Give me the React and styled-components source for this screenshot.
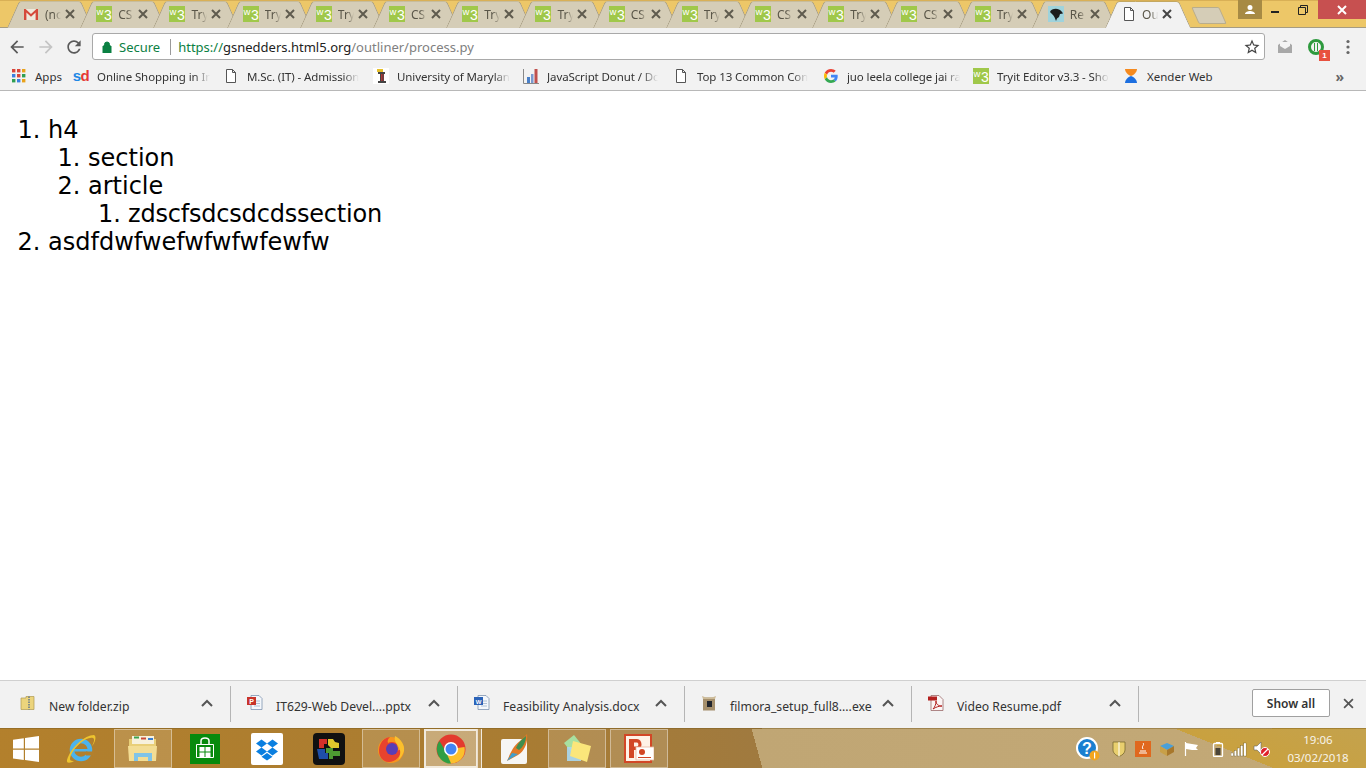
import React from 'react';
import styled, { createGlobalStyle } from 'styled-components';

const GlobalStyle = createGlobalStyle`
  html, body { margin: 0; padding: 0; height: 100%; background: #fff; overflow: hidden; }
  #root { height: 100%; }
`;

const uiFont = `"Noto Sans", "Open Sans", sans-serif`;

const Page = styled.div`
  display: flex;
  flex-direction: column;
  width: 1366px;
  height: 768px;
  font-family: ${uiFont};
`;

/* ---------- tab strip ---------- */
const TabStrip = styled.div`
  display: flex;
  height: 28px;
  flex: none;
  background: #edc768;
  box-shadow: inset 0 1px 0 #d9b056;
  padding-left: 7px;
  position: relative;
`;

const TabShape = styled.div`
  position: relative;
  isolation: isolate;
  flex: none;
  width: 85px;
  height: 28px;
  margin-right: -11.8px;
  display: flex;
  align-items: center;
  padding-left: 16px;
  box-sizing: border-box;

  &::before, &::after {
    content: '';
    position: absolute;
    z-index: -1;
    top: 1px;
    bottom: 0;
    width: 50%;
    background: ${(p) => (p.$active ? '#f2f2f2' : '#d5cdb7')};
    border-top: 1px solid ${(p) => (p.$active ? '#c4a860' : '#c8bd9b')};
  }
  &::before {
    left: 6px;
    transform: skewX(-24deg);
    border-left: 1px solid #a69c82;
    border-top-left-radius: 3px;
  }
  &::after {
    right: 6px;
    transform: skewX(24deg);
    border-right: 1px solid #a69c82;
    border-top-right-radius: 3px;
  }
`;

const TabTitle = styled.span`
  width: 16px;
  margin-left: ${(p) => (p.$active ? '5px' : '6px')};
  overflow: hidden;
  white-space: nowrap;
  font-size: 12px;
  color: #5a5648;
  -webkit-mask-image: linear-gradient(to right, #000 55%, transparent);
  mask-image: linear-gradient(to right, #000 55%, transparent);
`;

const TabClose = styled.svg`
  width: 10px;
  height: 10px;
  margin-left: 4px;
  flex: none;
`;

const TabLine = styled.div`
  position: absolute;
  left: 0;
  right: 0;
  bottom: 0;
  height: 1px;
  background: #a69c82;
`;

const ActiveGap = styled.div`
  position: absolute;
  left: 1107px;
  width: 81px;
  bottom: 0;
  height: 1px;
  background: #f2f2f2;
`;

const NewTab = styled.div`
  flex: none;
  width: 26px;
  height: 15px;
  margin: 7px 0 0 17px;
  background: #d5cdb7;
  border: 1px solid #b9ad8c;
  border-radius: 2px;
  transform: skewX(24deg);
`;

const WindowControls = styled.div`
  margin-left: auto;
  display: flex;
  height: 19px;
  position: relative;
  z-index: 2;
`;

const AvatarButton = styled.div`
  width: 24px;
  background: #a78a44;
  display: flex;
  align-items: center;
  justify-content: center;
`;

const WindowButton = styled.div`
  width: ${(p) => p.$w}px;
  background: ${(p) => p.$bg || 'transparent'};
  display: flex;
  align-items: center;
  justify-content: center;
`;

/* ---------- toolbar ---------- */
const Toolbar = styled.div`
  display: flex;
  align-items: center;
  flex: none;
  height: 35px;
  box-sizing: border-box;
  padding-top: 2px;
  background: #f2f2f2;
`;

const NavButton = styled.div`
  width: 28.5px;
  display: flex;
  justify-content: center;
  flex: none;
  &:first-child { margin-left: 3px; }
`;

const Omnibox = styled.div`
  width: 1173px;
  height: 27px;
  margin-left: 3.5px;
  flex: none;
  box-sizing: border-box;
  background: #fff;
  border: 1px solid #a9a9a9;
  border-radius: 3px;
  display: flex;
  align-items: center;
  padding: 0 3px 0 9px;
  font-size: 13px;
`;

const Secure = styled.span`
  color: #0b8043;
  margin-left: 7px;
`;

const OmniDivider = styled.span`
  width: 1px;
  height: 16px;
  background: #9a9a9a;
  margin: 0 7px 0 10px;
`;

const UrlPart = styled.span`
  color: ${(p) => p.$c};
  white-space: pre;
`;

const StarBox = styled.div`
  margin-left: auto;
  display: flex;
`;

const ExtArea = styled.div`
  display: flex;
  align-items: center;
  flex: 1;
  position: relative;
`;

const ExtSlot = styled.div`
  position: relative;
  width: ${(p) => p.$w}px;
  flex: none;
  display: flex;
  justify-content: center;
`;

const Badge = styled.span`
  position: absolute;
  top: 11px;
  left: 14px;
  width: 11px;
  height: 11px;
  background: #e8513f;
  color: #fff;
  font: bold 8px/11px "Liberation Sans", sans-serif;
  text-align: center;
`;

/* ---------- bookmarks ---------- */
const BookmarkBar = styled.div`
  display: flex;
  align-items: center;
  flex: none;
  height: 28px;
  box-sizing: border-box;
  background: #f2f2f2;
  border-bottom: 1px solid #b8b8b8;
  padding: 0 0 1px 11px;
  position: relative;
`;

const AppsItem = styled.div`
  display: flex;
  align-items: center;
  width: 62px;
  flex: none;
`;

const Bookmark = styled.div`
  display: flex;
  align-items: center;
  width: ${(p) => p.$w || 150}px;
  flex: none;
`;

const BookmarkIcon = styled.div`
  width: 16px;
  height: 16px;
  flex: none;
  margin-right: 8px;
  display: flex;
  align-items: center;
  justify-content: center;
`;

const BookmarkLabel = styled.span`
  font-size: 11.5px;
  color: #333;
  white-space: nowrap;
  overflow: hidden;
  max-width: 113px;
  ${(p) => p.$fade && `
    letter-spacing: -0.1px;
    -webkit-mask-image: linear-gradient(to right, #000 86%, transparent);
    mask-image: linear-gradient(to right, #000 86%, transparent);
  `}
`;

const SdLogo = styled.span`
  font: bold 15px/16px "Liberation Sans", sans-serif;
  letter-spacing: -0.5px;
  color: #1e88e5;
  b { color: #e53935; }
`;

const More = styled.span`
  margin-left: auto;
  margin-right: 22px;
  font-size: 14px;
  color: #666;
  font-weight: bold;
`;

/* ---------- content ---------- */
const Content = styled.div`
  flex: 1;
  min-height: 0;
  background: #fff;
  padding: 25px 8px 0;
  font-family: "DejaVu Sans", Verdana, sans-serif;
  font-size: 24px;
  line-height: 28px;
  color: #000;
`;

const Outline = styled.ol`
  margin: 0;
  padding-left: 40px;
`;

const DeepEntry = styled.li`
  letter-spacing: -0.2px;
`;

/* ---------- downloads ---------- */
const DownloadBar = styled.div`
  display: flex;
  flex: none;
  height: 48px;
  box-sizing: border-box;
  background: #f2f2f2;
  border-top: 1px solid #d0d0d0;
  padding: 5px 0 3px 4px;
  position: relative;
`;

const DownloadItem = styled.div`
  width: 227px;
  flex: none;
  box-sizing: border-box;
  height: 36px;
  border-right: 1px solid #b5b5b5;
  display: flex;
  position: relative;
  padding-left: 16px;
`;

const FileIcon = styled.div`
  width: 16px;
  height: 16px;
  margin-top: 9px;
  flex: none;
`;

const FileName = styled.span`
  font-size: 12.2px;
  color: #333;
  margin: 12px 0 0 13px;
  white-space: nowrap;
`;

const Chevron = styled.svg`
  position: absolute;
  right: 16px;
  top: 13px;
  width: 14px;
  height: 9px;
`;

const ShowAll = styled.button`
  margin-left: auto;
  align-self: flex-start;
  margin-top: 3px;
  width: 78px;
  height: 28px;
  background: #fff;
  border: 1px solid #a0a0a0;
  border-radius: 2px;
  font: 600 12px ${uiFont};
  color: #333;
  padding: 0;
`;

const BarClose = styled.svg`
  width: 11px;
  height: 11px;
  margin: 12px 12px 0 13px;
  flex: none;
`;

/* ---------- taskbar ---------- */
const Taskbar = styled.div`
  flex: none;
  height: 40px;
  box-sizing: border-box;
  display: flex;
  border-top: 1px solid rgba(120, 90, 30, 0.45);
  background:
    linear-gradient(21.8deg, transparent 473px, #c9a13f 473px, #c4a24d 100%),
    linear-gradient(74.6deg, #b3802c 0, #a97c32 500px, #a07a3f 735px, #c0a674 735px, #c3a977 100%);
`;

const StartSlot = styled.div`
  width: 52px;
  flex: none;
  display: flex;
  align-items: center;
  justify-content: center;
`;

const TaskSlot = styled.div`
  width: 58px;
  flex: none;
  margin-right: 4px;
  box-sizing: border-box;
  display: flex;
  align-items: center;
  justify-content: center;
  position: relative;
  ${(p) => p.$open && `
    background: rgba(255, 255, 255, 0.14);
    border: 1px solid rgba(255, 255, 255, 0.4);
  `}
`;

/* the running window with a second one stacked behind it */
const CurrentSlot = styled(TaskSlot)`
  padding-right: 4px;
  background: linear-gradient(to right, rgba(255, 255, 255, 0.35) 53px, transparent 53px);
  &::before {
    content: '';
    position: absolute;
    left: 0;
    top: 0;
    bottom: 0;
    width: 54px;
    box-sizing: border-box;
    border: 2px solid rgba(255, 255, 255, 0.75);
  }
  &::after {
    content: '';
    position: absolute;
    right: 0;
    top: 0;
    bottom: 0;
    width: 3px;
    background: rgba(255, 255, 255, 0.2);
    border-right: 1px solid rgba(255, 255, 255, 0.8);
  }
`;

const Tray = styled.div`
  margin-left: auto;
  display: flex;
  align-items: center;
`;

const TrayIcon = styled.div`
  width: 16px;
  margin-right: ${(p) => p.$gap || 0}px;
  display: flex;
  justify-content: center;
  flex: none;
`;

const Clock = styled.div`
  width: 96px;
  text-align: center;
  font-size: 11.5px;
  line-height: 18px;
  color: #f8f4ea;
  flex: none;
`;

/* ---------- drawings ---------- */
const Svg = ({ s = 16, w, h, vb = '0 0 16 16', children }) => (
  <svg width={w || s} height={h || s} viewBox={vb} style={{ display: 'block', flex: 'none' }}>{children}</svg>
);

const M_BACK = 'M20 11H7.83l5.59-5.59L12 4l-8 8 8 8 1.41-1.41L7.83 13H20v-2z';
const M_RELOAD = 'M17.65 6.35C16.2 4.9 14.21 4 12 4c-4.42 0-7.99 3.58-7.99 8s3.57 8 7.99 8c3.73 0 6.84-2.55 7.73-6h-2.08c-.82 2.33-3.04 4-5.65 4-3.31 0-6-2.69-6-6s2.69-6 6-6c1.66 0 3.14.69 4.22 1.78L13 11h7V4l-2.35 2.35z';
const M_STAR = 'M22 9.24l-7.19-.62L12 2 9.19 8.63 2 9.24l5.46 4.73L5.82 21 12 17.27 18.18 21l-1.63-7.03L22 9.24zM12 15.4l-3.76 2.27 1-4.28-3.32-2.88 4.38-.38L12 6.1l1.71 4.04 4.38.38-3.32 2.88 1 4.28L12 15.4z';

const GmailIcon = () => (
  <Svg>
    <rect x="1" y="3" width="14" height="11" fill="#eee9dc" />
    <path d="M1 14V3h1.6L8 8l5.4-5H15v11h-2.4V6.6L8 10.8 3.4 6.6V14z" fill="#d5493a" />
  </Svg>
);

const W3Icon = () => (
  <Svg>
    <rect width="16" height="16" fill="#a0c84a" />
    <text x="0.5" y="9" fontFamily="Liberation Sans" fontSize="9.5" fill="#fff">w</text>
    <text x="8" y="13.500" fontFamily="Liberation Sans" fontSize="14" fill="#fff">3</text>
  </Svg>
);

const PageIcon = ({ c = '#555' }) => (
  <Svg>
    <path d="M3.5 1.5h6l3 3v10h-9z M9.5 1.5v3h3" fill="#fff" stroke={c} strokeWidth="1" />
  </Svg>
);

const BeaverIcon = () => (
  <Svg>
    <rect width="16" height="16" fill="#9fd3dc" />
    <path d="M2 6c1-3 6-4 9-2.500 2 1 3 2 4 4l-3 .5-1 3-2 1.500-1 2.500c-1-3-2-5-3-6z" fill="#1c1c1c" />
  </Svg>
);

const XIcon = ({ c = '#5f5b4e', sw = 2 }) => (
  <path d="M1 1l8 8M9 1l-8 8" stroke={c} strokeWidth={sw} fill="none" />
);

const AppsIcon = () => (
  <Svg s={14} vb="0 0 14 14">
    {['#d9453a', '#d9453a', '#e9a21b', '#3a7fe0', '#d9453a', '#2f9e52', '#2f9e52', '#3a7fe0', '#e9a21b'].map((c, i) => (
      <rect key={i} x={(i % 3) * 5} y={Math.floor(i / 3) * 5} width="3.4" height="3.4" fill={c} />
    ))}
  </Svg>
);

const MarylandIcon = () => (
  <Svg>
    <rect width="16" height="16" fill="#fff" />
    <rect x="4" y="1" width="6" height="3" fill="#e6c02c" />
    <path d="M5 4h7v2h-1v7h2v2H5v-2h2V6H5z" fill="#444" />
    <path d="M8.5 6v7M10 6v7" stroke="#c33" strokeWidth="0.8" />
  </Svg>
);

const ChartIcon = () => (
  <Svg>
    <path d="M.5 1v14.5H16" stroke="#888" fill="none" />
    <rect x="4" y="9" width="3" height="6" fill="#4a80c8" />
    <rect x="8" y="6" width="2.5" height="9" fill="#7a9ad0" />
    <rect x="11.5" y="1" width="3" height="14" fill="#c0504d" />
  </Svg>
);

const GoogleIcon = () => (
  <Svg s={14} vb="0 0 48 48">
    <path fill="#EA4335" d="M24 9.5c3.5 0 6.7 1.2 9.2 3.6l6.9-6.9C35.9 2.4 30.5 0 24 0 14.6 0 6.5 5.4 2.6 13.2l8 6.2C12.5 13.7 17.8 9.5 24 9.5z" />
    <path fill="#4285F4" d="M47 24.5c0-1.6-.2-3.1-.4-4.5H24v9h12.9c-.6 3-2.3 5.5-4.8 7.2l7.7 6c4.5-4.2 7.2-10.3 7.2-17.7z" />
    <path fill="#FBBC05" d="M10.5 28.6c-.5-1.4-.8-3-.8-4.6s.3-3.2.8-4.6l-8-6.2C.9 16.5 0 20.1 0 24s.9 7.5 2.6 10.8l7.9-6.2z" />
    <path fill="#34A853" d="M24 48c6.5 0 11.9-2.1 15.9-5.8l-7.7-6c-2.2 1.4-4.9 2.3-8.2 2.3-6.2 0-11.5-4.2-13.4-9.9l-8 6.2C6.5 42.6 14.6 48 24 48z" />
  </Svg>
);

const XenderIcon = () => (
  <Svg>
    <path d="M2 1h12c0 3-3 6-6 7-3-1-6-4-6-7z" fill="#f58a1f" />
    <path d="M2 15h12c0-3-3-6-6-7-3 1-6 4-6 7z" fill="#1d6fe0" />
  </Svg>
);

const ZipIcon = () => (
  <Svg>
    <path d="M1 3h5v-1.500h8v13H1z" fill="#ecd47c" stroke="#b09a50" strokeWidth="0.7" />
    <path d="M9 1.500v13" stroke="#6a7c8c" strokeWidth="1.600" strokeDasharray="1.500 1" />
  </Svg>
);

const OfficeFile = ({ bg, tag, small }) => (
  <Svg>
    <path d="M4 .5h8l3 3v11H4z" fill="#f4f7fb" stroke="#7f94b0" strokeWidth="0.8" />
    <path d="M7 6h6M7 8.500h6M7 11h6" stroke="#9fb2cc" strokeWidth="0.8" />
    <rect x="0" y="2" width="9" height="8" fill={bg} />
    <text x="4.500" y="8.500" textAnchor="middle" fontFamily="Liberation Sans" fontSize={small ? 6 : 7} fontWeight="bold" fill="#fff">{tag}</text>
  </Svg>
);

const BoxFile = () => (
  <Svg>
    <path d="M2 2.500h12v13H2z" fill="#a58f6c" />
    <path d="M1 1l4 1.500h6L15 1l-1 3H2z" fill="#cdbb98" />
    <rect x="6" y="6" width="5" height="6" fill="#20242c" />
  </Svg>
);

const PdfFile = () => (
  <Svg>
    <path d="M3 .5h8l4 4v11H3z" fill="#fbf5f5" stroke="#9a6a6a" strokeWidth="0.8" />
    <rect x="0" y="1.500" width="9" height="4" fill="#b3201f" />
    <path d="M5 14c2-2 3-5 3-8 0 3 2 5 6 5-3 0-6 1-9 3z" fill="none" stroke="#b3201f" strokeWidth="1" />
  </Svg>
);

const WindowsLogo = () => (
  <Svg w={26} h={26} vb="0 0 26 26">
    <path d="M0 3.700l10.800-1.500v10.300H0zM12 2L26 0v12.500H12zM0 13.700h10.800v10.200L0 22.400zM12 13.700h14V26l-14-2z" fill="#fff" />
  </Svg>
);

const IeIcon = () => (
  <Svg w={32} h={32} vb="0 0 32 32">
    <circle cx="16" cy="17" r="9" fill="none" stroke="#4cb3ec" strokeWidth="4.500" />
    <path d="M9 16h16v2.500H9z" fill="#4cb3ec" />
    <rect x="21" y="18.500" width="8" height="4" fill="#b3802c" />
    <path d="M29 2C20 2 6 14 2 27c-1 4 4 3 7 1C5 28 4 27 6 22 10 13 22 3 28 5c2 1 1 4-1 8 3-3 5-10 2-11z" fill="#eec42e" />
  </Svg>
);

const ExplorerIcon = () => (
  <Svg w={32} h={32} vb="0 0 32 32">
    <path d="M2 6h27v20H2z" fill="#e9cf78" />
    <path d="M5 3h22v8H5z" fill="#f7f1dc" />
    <rect x="7" y="3.500" width="5" height="2" fill="#3fa34d" />
    <rect x="14" y="4.500" width="5" height="2" fill="#c84b3a" />
    <rect x="21" y="5" width="5" height="2" fill="#3c7fd0" />
    <path d="M1 13h29l-1 15H2z" fill="#f3dd94" />
    <path d="M7 20h18v8h-4v-4H11v4H7z" fill="#7fc4e8" />
  </Svg>
);

const StoreIcon = () => (
  <Svg w={30} h={30} vb="0 0 30 30">
    <rect width="30" height="30" fill="#078a0d" />
    <path d="M6.500 10.500h17v13h-17z" fill="none" stroke="#fff" />
    <path d="M11 10V7c0-4 8-4 8 0v3" fill="none" stroke="#fff" strokeWidth="1.500" />
    <path d="M9.500 13h5v4.500h-5zM15.500 13h5v4.500h-5zM9.500 18.500h5V23h-5zM15.500 18.500h5V23h-5z" fill="#fff" />
  </Svg>
);

const DropboxIcon = () => (
  <Svg w={32} h={32} vb="0 0 32 32">
    <rect width="32" height="32" rx="2" fill="#fff" />
    <path d="M10.500 6.500L16 10.500l-5.500 4-5.500-4zM21.500 6.500l5.500 4-5.500 4-5.500-4zM10.500 14.500l5.500 4-5.500 4-5.500-4zM21.500 14.500l5.500 4-5.500 4-5.500-4zM10.500 23.800l5.500-3.800 5.500 3.800-5.500 3.700z" fill="#0a7fe0" />
  </Svg>
);

const PuzzleIcon = () => (
  <Svg w={32} h={32} vb="0 0 32 32">
    <rect width="32" height="32" rx="4" fill="#111" />
    <path d="M6 6h8v5h-3v4H6z" fill="#d4302a" />
    <path d="M15 6h5l2 3 4 1v5h-8l-3-3z" fill="#e2c82c" />
    <path d="M4 16h8v4h3v6H6z" fill="#1f4fa8" />
    <path d="M13 15h7v3h7v5h-7v3h-4v-6h-3z" fill="#4e9a32" />
  </Svg>
);

const FirefoxIcon = () => (
  <Svg w={30} h={30} vb="0 0 30 30">
    <circle cx="15" cy="16" r="13" fill="#f7941e" />
    <path d="M4 22C1 14 5 4 14 3c-2 2-3 4-2 6 3-2 9-1 11 3-3-1-6 0-6 2 0 4 6 3 8 1 0 8-6 13-12 13-4 0-7-2-9-6z" fill="#e8432e" />
    <circle cx="16" cy="15" r="6" fill="#5a3db5" />
    <path d="M19 2c6 3 10 9 9 15-1 3-3 7-6 9 3-5 3-10 0-14-2-3-4-6-3-10z" fill="#fbc02d" />
  </Svg>
);

const ChromeIcon = () => (
  <Svg w={30} h={30} vb="0 0 30 30">
    <circle cx="15" cy="15" r="14.500" fill="#e33b2e" />
    <path d="M3 23.500L15 15l13.500-2c1.500 7-3 16-13.500 16.500-5 0-9.500-2.500-12-6z" fill="#fbc02d" />
    <path d="M.8 15C1 11 2 9 3.500 7L10 18l5 11.500C7 30 1 23 .8 15z" fill="#2f9e44" />
    <circle cx="15" cy="15" r="7" fill="#fff" />
    <circle cx="15" cy="15" r="5.500" fill="#4285f4" />
  </Svg>
);

const QuillIcon = () => (
  <Svg w={30} h={30} vb="0 0 30 30">
    <rect x="1" y="5" width="26" height="25" rx="2" fill="#f6f6f4" />
    <path d="M27 0c1 8-2 17-9 21l-11 6c3-7 6-15 13-20z" fill="#e07a28" />
    <path d="M26 2c0 6-3 11-7 14l-3-2c2-5 6-9 10-12z" fill="#3f8f4f" />
    <path d="M18 20l-11 7 5-8z" fill="#3d9fd0" />
  </Svg>
);

const NotesIcon = () => (
  <Svg w={32} h={28} vb="0 0 32 28">
    <path d="M3 8L13 0l8 10-10 8z" fill="#a8e0a0" />
    <path d="M6 12h14v14H6z" fill="#a8d8f0" opacity="0.9" />
    <path d="M12 6l18 5-4 16-17-6z" fill="#fbe67a" />
  </Svg>
);

const PowerPointIcon = () => (
  <Svg w={30} h={30} vb="0 0 30 30">
    <rect width="28" height="29" fill="#d24726" />
    <rect x="2" y="2" width="24" height="25" fill="#fff2e6" />
    <path d="M5 5h8c6 0 6 11 0 11h-3v8H5z" fill="#d24726" />
    <path d="M10 8.500h3c1.800 0 1.800 4 0 4h-3z" fill="#fff2e6" />
    <rect x="12" y="13" width="18" height="13" fill="#fff" stroke="#e8b8a0" strokeWidth="0.8" />
    <circle cx="18" cy="18" r="3" fill="#d24726" />
    <path d="M14 23.500h13" stroke="#d24726" />
  </Svg>
);

const HelpIcon = () => (
  <Svg w={24} h={24} vb="0 0 24 24">
    <circle cx="11" cy="11" r="10" fill="#1a7fd0" stroke="#fff" strokeWidth="2" />
    <text x="11" y="16.500" textAnchor="middle" fontFamily="Liberation Sans" fontWeight="bold" fontSize="16" fill="#fff">?</text>
    <circle cx="18.500" cy="18.500" r="5" fill="#f2a51e" />
    <rect x="18" y="15.500" width="1.200" height="6" fill="#fff" />
  </Svg>
);

const ShieldIcon = () => (
  <Svg>
    <path d="M2 1h12v8c0 3-3 5.500-6 6.500C5 14.500 2 12 2 9z" fill="#e9cf6e" stroke="#7a6a30" strokeWidth="0.8" />
    <path d="M8 1v14.500" stroke="#fff" strokeWidth="2" opacity="0.5" />
  </Svg>
);

const JavaIcon = () => (
  <Svg>
    <rect width="16" height="16" fill="#e0681e" />
    <path d="M4 12h8M5 10h6M8 2c2 2-2 3 0 6" stroke="#fff" fill="none" />
  </Svg>
);

const BoxTray = () => (
  <Svg>
    <path d="M1 5l7-3 7 3-7 4z" fill="#4aa0d8" />
    <path d="M1 5l7 4v6l-7-4z" fill="#c8a048" />
    <path d="M15 5l-7 4v6l7-4z" fill="#a8782c" />
  </Svg>
);

const FlagIcon = () => (
  <Svg>
    <path d="M2.500 1v14" stroke="#fff" strokeWidth="1.200" />
    <path d="M3 2l6 1 6 1-2 3 2 2-6 0-6-1z" fill="#fff" />
  </Svg>
);

const BatteryIcon = () => (
  <Svg>
    <rect x="3.500" y="2.500" width="9" height="13" rx="1" fill="none" stroke="#fff" strokeWidth="1.300" />
    <rect x="6" y="1" width="4" height="1.500" fill="#fff" />
    <rect x="5.500" y="7" width="5" height="7" fill="#4a4438" />
  </Svg>
);

const SignalIcon = () => (
  <Svg>
    {[0, 1, 2, 3, 4].map((i) => (
      <rect key={i} x={i * 3.2} y={12 - i * 2.500} width="2.300" height={3 + i * 2.500} fill="#fff" stroke="#54471f" strokeWidth="0.3" />
    ))}
  </Svg>
);

const VolumeIcon = () => (
  <Svg w={18} h={18} vb="0 0 18 18">
    <path d="M1 6h3l4-4v12L4 10H1z" fill="#fff" stroke="#666" strokeWidth="0.6" />
    <circle cx="12" cy="12" r="4.500" fill="#e0202a" stroke="#fff" />
    <path d="M9 15l6-6" stroke="#fff" strokeWidth="1.300" />
  </Svg>
);

/* ---------- data ---------- */
const tabs = [
  ['gmail', '(no'], ['w3', 'CS'], ['w3', 'Try'], ['w3', 'Try'], ['w3', 'Try'],
  ['w3', 'CS'], ['w3', 'Try'], ['w3', 'Try'], ['w3', 'CS'], ['w3', 'Try'],
  ['w3', 'CS'], ['w3', 'Try'], ['w3', 'CS'], ['w3', 'Try'], ['beaver', 'Re'],
];

const tabIcons = { gmail: <GmailIcon />, w3: <W3Icon />, beaver: <BeaverIcon /> };

const bookmarks = [
  [<SdLogo>s<b>d</b></SdLogo>, 'Online Shopping in In'],
  [<PageIcon />, 'M.Sc. (IT) - Admission'],
  [<MarylandIcon />, 'University of Marylan'],
  [<ChartIcon />, 'JavaScript Donut / Dc'],
  [<PageIcon />, 'Top 13 Common Con'],
  [<GoogleIcon />, 'juo leela college jai ra'],
  [<W3Icon />, 'Tryit Editor v3.3 - Sho'],
];

const downloads = [
  [<ZipIcon />, 'New folder.zip'],
  [<OfficeFile bg="#c8342a" tag="P" />, 'IT629-Web Devel....pptx'],
  [<OfficeFile bg="#2b63b8" tag="W" small />, 'Feasibility Analysis.docx'],
  [<BoxFile />, 'filmora_setup_full8....exe'],
  [<PdfFile />, 'Video Resume.pdf'],
];

export default function App() {
  return (
    <Page>
      <GlobalStyle />
      <TabStrip>
        <TabLine />
        {tabs.map(([icon, title], i) => (
          <TabShape key={i}>
            {tabIcons[icon]}
            <TabTitle>{title}</TabTitle>
            <TabClose viewBox="0 0 10 10"><XIcon /></TabClose>
          </TabShape>
        ))}
        <TabShape $active>
          <PageIcon />
          <TabTitle $active>Ou</TabTitle>
          <TabClose viewBox="0 0 10 10"><XIcon c="#444" /></TabClose>
        </TabShape>
        <ActiveGap />
        <NewTab />
        <WindowControls>
          <AvatarButton>
            <Svg s={12} vb="0 0 12 12"><path d="M6 1a2.300 2.300 0 110 5 2.300 2.300 0 010-5zM1 10c0-2 3-3 5-3s5 1 5 3z" fill="#fff" /></Svg>
          </AvatarButton>
          <WindowButton $w={26}><Svg s={10} vb="0 0 10 10"><rect x="1" y="6" width="8" height="2" fill="#222" /></Svg></WindowButton>
          <WindowButton $w={30}><Svg s={10} vb="0 0 10 10"><path d="M.5 2.500h7v7h-7zM2.500 2.500v-2h7v7h-2" fill="none" stroke="#222" /></Svg></WindowButton>
          <WindowButton $w={48} $bg="#c75050"><Svg s={10} vb="0 0 10 10"><XIcon c="#fff" /></Svg></WindowButton>
        </WindowControls>
      </TabStrip>

      <Toolbar>
        <NavButton><Svg s={20} vb="0 0 24 24"><path d={M_BACK} fill="#5a5a5a" /></Svg></NavButton>
        <NavButton><Svg s={20} vb="0 0 24 24"><g transform="matrix(-1 0 0 1 24 0)"><path d={M_BACK} fill="#c4c4c4" /></g></Svg></NavButton>
        <NavButton><Svg s={20} vb="0 0 24 24"><path d={M_RELOAD} fill="#5a5a5a" /></Svg></NavButton>
        <Omnibox>
          <Svg s={10} w={10} h={12} vb="0 0 10 12"><path d="M2.500 5V3.500a2.500 2.500 0 015 0V5M1 5h8v7H1z" fill="#0b8043" stroke="#0b8043" /></Svg>
          <Secure>Secure</Secure>
          <OmniDivider />
          <UrlPart $c="#0b8043">https://</UrlPart>
          <UrlPart $c="#222">gsnedders.html5.org</UrlPart>
          <UrlPart $c="#808080">/outliner/process.py</UrlPart>
          <StarBox><Svg s={18} vb="0 0 24 24"><path d={M_STAR} fill="#444" /></Svg></StarBox>
        </Omnibox>
        <ExtArea>
          <ExtSlot $w={40}>
            <Svg>
              <path d="M1 6l7-5 7 5v8H1z" fill="#a8a8a8" />
              <path d="M3 7V3h10v4L8 10z" fill="#f4f4f4" />
            </Svg>
          </ExtSlot>
          <ExtSlot $w={22}>
            <Svg>
              <circle cx="8" cy="8" r="6.500" fill="none" stroke="#2e9a3e" strokeWidth="3" />
              <path d="M6.500 4v8M9.500 4v8" stroke="#2e9a3e" />
            </Svg>
            <Badge>1</Badge>
          </ExtSlot>
          <ExtSlot $w={42}>
            <Svg s={16}><circle cx="8" cy="2.500" r="1.600" fill="#666" /><circle cx="8" cy="8" r="1.600" fill="#666" /><circle cx="8" cy="13.500" r="1.600" fill="#666" /></Svg>
          </ExtSlot>
        </ExtArea>
      </Toolbar>

      <BookmarkBar>
        <AppsItem>
          <BookmarkIcon><AppsIcon /></BookmarkIcon>
          <BookmarkLabel>Apps</BookmarkLabel>
        </AppsItem>
        {bookmarks.map(([icon, label]) => (
          <Bookmark key={label}>
            <BookmarkIcon>{icon}</BookmarkIcon>
            <BookmarkLabel $fade>{label}</BookmarkLabel>
          </Bookmark>
        ))}
        <Bookmark $w={90}>
          <BookmarkIcon><XenderIcon /></BookmarkIcon>
          <BookmarkLabel>Xender Web</BookmarkLabel>
        </Bookmark>
        <More>»</More>
      </BookmarkBar>

      <Content>
        <Outline>
          <li>
            h4
            <Outline>
              <li>section</li>
              <li>
                article
                <Outline>
                  <DeepEntry>zdscfsdcsdcdssection</DeepEntry>
                </Outline>
              </li>
            </Outline>
          </li>
          <li>asdfdwfwefwfwfwfewfw</li>
        </Outline>
      </Content>

      <DownloadBar>
        {downloads.map(([icon, name]) => (
          <DownloadItem key={name}>
            <FileIcon>{icon}</FileIcon>
            <FileName>{name}</FileName>
            <Chevron viewBox="0 0 14 9"><path d="M2 7l5-5 5 5" fill="none" stroke="#555" strokeWidth="2" /></Chevron>
          </DownloadItem>
        ))}
        <ShowAll>Show all</ShowAll>
        <BarClose viewBox="0 0 10 10"><XIcon c="#555" sw={1.600} /></BarClose>
      </DownloadBar>

      <Taskbar>
        <StartSlot><WindowsLogo /></StartSlot>
        <TaskSlot><IeIcon /></TaskSlot>
        <TaskSlot $open><ExplorerIcon /></TaskSlot>
        <TaskSlot><StoreIcon /></TaskSlot>
        <TaskSlot><DropboxIcon /></TaskSlot>
        <TaskSlot><PuzzleIcon /></TaskSlot>
        <TaskSlot $open><FirefoxIcon /></TaskSlot>
        <CurrentSlot><ChromeIcon /></CurrentSlot>
        <TaskSlot><QuillIcon /></TaskSlot>
        <TaskSlot $open><NotesIcon /></TaskSlot>
        <TaskSlot $open><PowerPointIcon /></TaskSlot>
        <Tray>
          <TrayIcon $gap={15}><HelpIcon /></TrayIcon>
          <TrayIcon $gap={8}><ShieldIcon /></TrayIcon>
          <TrayIcon $gap={8}><JavaIcon /></TrayIcon>
          <TrayIcon $gap={8}><BoxTray /></TrayIcon>
          <TrayIcon $gap={11}><FlagIcon /></TrayIcon>
          <TrayIcon $gap={5}><BatteryIcon /></TrayIcon>
          <TrayIcon $gap={7}><SignalIcon /></TrayIcon>
          <TrayIcon><VolumeIcon /></TrayIcon>
          <Clock>19:06<br />03/02/2018</Clock>
        </Tray>
      </Taskbar>
    </Page>
  );
}
